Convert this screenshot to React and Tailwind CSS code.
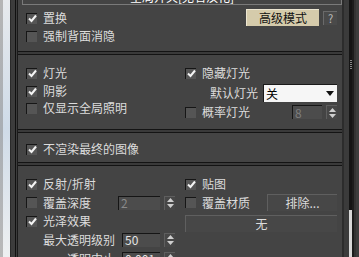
import React from "react";

const font = { fontFamily: '"Noto Sans CJK SC", "Noto Sans", sans-serif' };

function Check({ checked }) {
  return (
    <span className="w-[11px] h-[11px] shrink-0 bg-[#555] border-t border-l border-[#161616] border-b-[#4a4a4a] border-r-[#4a4a4a] flex items-center justify-center">
      {checked && (
        <svg width="9" height="9" viewBox="0 0 9 9">
          <path d="M1 4.5 L3.5 7 L8 1.5" stroke="#f4f4f4" strokeWidth="2" fill="none" />
        </svg>
      )}
    </span>
  );
}

function CB({ checked, label, className = "" }) {
  return (
    <div className={"flex items-center gap-[6px] " + className}>
      <Check checked={checked} />
      <span className="text-[12px] leading-[14px] text-[#dcdcdc] whitespace-nowrap">{label}</span>
    </div>
  );
}

function Arrows() {
  return (
    <div className="w-[11px] h-[14px] bg-[#474747] border-t border-l border-[#5e5e5e] border-b-[#222] border-r-[#222] flex flex-col items-center justify-center gap-[2px]">
      <svg width="7" height="4" viewBox="0 0 7 4"><path d="M3.5 0 L7 4 L0 4 Z" fill="#cfcfcf" /></svg>
      <svg width="7" height="4" viewBox="0 0 7 4"><path d="M0 0 L7 0 L3.5 4 Z" fill="#cfcfcf" /></svg>
    </div>
  );
}

function Spinner({ value, w, disabled }) {
  return (
    <div className="flex items-center gap-[4px]">
      <div
        className={
          "h-[14px] bg-[#4c4c4c] border-t border-l border-[#151515] border-b-[#5a5a5a] border-r-[#5a5a5a] flex items-center pl-[2px] text-[12px] leading-[12px] " +
          (disabled ? "text-[#8a8a8a]" : "text-[#e4e4e4]")
        }
        style={{ width: w }}
      >
        {value}
      </div>
      <Arrows />
    </div>
  );
}

function Sep() {
  return <div className="h-[4px] shrink-0 border-t border-b border-[#141414] bg-[#3a3a3a]" />;
}

function Btn({ children, className = "" }) {
  return (
    <div
      className={
        "h-[17px] bg-[#474747] border-t border-l border-[#5f5f5f] border-b-[#1c1c1c] border-r-[#1c1c1c] flex items-center justify-center text-[12px] leading-[12px] text-[#dcdcdc] " +
        className
      }
    >
      {children}
    </div>
  );
}

export default function App() {
  return (
    <div className="w-[359px] h-[257px] flex overflow-hidden bg-[#444]" style={font}>
      {/* left desktop strip */}
      <div className="w-[10px] h-full flex shrink-0">
        <div className="w-[3px] h-full bg-gradient-to-b from-[#b5b5b5] via-[#a9aeb4] to-[#b9b9b9]" />
        <div className="w-[7px] h-full bg-gradient-to-b from-[#e7eaed] via-[#cfdbe8] to-[#eef0f1]" />
      </div>
      <div className="w-[8px] h-full flex shrink-0">
        <div className="w-[1px] bg-[#2a2a2a]" />
        <div className="w-[4px] bg-[#3c3c3c]" />
        <div className="w-[1px] bg-[#111]" />
        <div className="w-[1px] bg-[#3c3c3c]" />
        <div className="w-[1px] bg-[#1a1a1a]" />
      </div>

      {/* panel */}
      <div className="w-[324px] h-full flex flex-col shrink-0">
        {/* title box */}
        <div className="ml-[4px] h-[5px] shrink-0 border-l border-r border-b border-[#7a7a7a] overflow-hidden flex justify-center">
          <div className="-mt-[10px] text-[12px] leading-[14px] text-white whitespace-nowrap">全局开关[无名汉化]</div>
        </div>

        {/* section 1 */}
        <div className="h-[46px] shrink-0 flex pt-[4px]">
          <div className="w-[228px] pl-[8px] flex flex-col">
            <CB checked label="置换" className="h-[18px]" />
            <CB label="强制背面消隐" className="h-[18px]" />
          </div>
          <div className="flex items-start gap-[4px]">
            <div className="w-[73px] h-[17px] bg-[#d5cbab] border-t border-l border-[#ece6d2] border-b-[#6c6655] border-r-[#6c6655] flex items-center justify-center text-[12px] leading-[12px] text-[#111]">
              高级模式
            </div>
            <div className="mt-[2px] w-[14px] h-[14px] bg-[#4a4a4a] border-t border-l border-[#6a6a6a] border-b-[#1e1e1e] border-r-[#1e1e1e] flex items-center justify-center text-[11px] leading-[11px] text-[#bdbdbd]">
              ?
            </div>
          </div>
        </div>
        <Sep />

        {/* section 2 */}
        <div className="h-[74px] shrink-0 flex pt-[9px]">
          <div className="w-[167px] pl-[8px] flex flex-col">
            <CB checked label="灯光" className="h-[18px]" />
            <CB checked label="阴影" className="h-[18px]" />
            <CB label="仅显示全局照明" className="h-[16px]" />
          </div>
          <div className="w-[152px] flex flex-col">
            <CB checked label="隐藏灯光" className="h-[18px]" />
            <div className="mt-[2px] h-[18px] flex items-center pl-[25px] gap-[5px]">
              <span className="text-[12px] leading-[14px] text-[#dcdcdc] whitespace-nowrap">默认灯光</span>
              <div className="w-[74px] h-[18px] bg-[#f6f6f6] border-t border-l border-[#1a1a1a] border-b-[#8a8a8a] border-r-[#8a8a8a] flex items-center justify-between pl-[2px] pr-[3px]">
                <span className="text-[12px] leading-[12px] text-black">关</span>
                <svg width="8" height="5" viewBox="0 0 8 5"><path d="M0 0 L8 0 L4 5 Z" fill="#111" /></svg>
              </div>
            </div>
            <div className="mt-[2px] h-[16px] flex items-center justify-between">
              <CB label="概率灯光" />
              <div className="flex items-center gap-[4px]">
                <div className="w-[30px] h-[14px] bg-[#4c4c4c] border-t border-l border-[#151515] border-b-[#5a5a5a] border-r-[#5a5a5a] flex items-center pl-[2px] text-[12px] leading-[12px] text-[#7e7e7e]">
                  8
                </div>
                <Arrows />
              </div>
            </div>
          </div>
        </div>
        <Sep />

        {/* section 3 */}
        <div className="h-[29px] shrink-0 pt-[7px] pl-[8px]">
          <CB checked label="不渲染最终的图像" className="h-[18px]" />
        </div>
        <Sep />

        {/* section 4 */}
        <div className="flex pt-[9px]">
          <div className="w-[167px] pl-[8px] flex flex-col">
            <CB checked label="反射/折射" className="h-[18px]" />
            <div className="h-[19px] flex items-center">
              <CB label="覆盖深度" className="w-[92px]" />
              <Spinner value="2" w={42} disabled />
            </div>
            <CB checked label="光泽效果" className="h-[18px]" />
            <div className="h-[19px] flex items-center">
              <span className="w-[96px] pl-[17px] text-[12px] leading-[14px] text-[#dcdcdc] whitespace-nowrap">最大透明级别</span>
              <Spinner value="50" w={38} />
            </div>
            <div className="h-[19px] flex items-center">
              <span className="w-[96px] pr-[7px] text-right text-[12px] leading-[14px] text-[#dcdcdc] whitespace-nowrap">透明中止</span>
              <Spinner value="0.001" w={38} />
            </div>
          </div>
          <div className="w-[152px] flex flex-col">
            <CB checked label="贴图" className="h-[18px]" />
            <div className="h-[19px] flex items-center justify-between">
              <CB label="覆盖材质" />
              <Btn className="w-[70px]">排除...</Btn>
            </div>
            <Btn className="mt-[3px] w-[152px]">无</Btn>
          </div>
        </div>
      </div>

      {/* right strip */}
      <div className="flex-1 h-full flex">
        <div className="w-[2px] bg-[#2c2c2c]" />
        <div className="w-[5px] bg-[#3b3b3b]" />
        <div className="w-[3px] bg-[#141414] flex flex-col">
          <div className="h-[60px]" />
          <div className="h-[12px] flex flex-col gap-[1px] items-center">
            <div className="w-[2px] h-[1px] bg-[#888]" />
            <div className="w-[2px] h-[1px] bg-[#888]" />
            <div className="w-[2px] h-[1px] bg-[#888]" />
            <div className="w-[2px] h-[1px] bg-[#888]" />
            <div className="w-[2px] h-[1px] bg-[#888]" />
          </div>
          <div className="flex-1" />
          <div className="h-[47px] bg-[#d8d8d8]" />
        </div>
        <div className="w-[2px] bg-[#1c1c1c]" />
        <div className="w-[2px] bg-[#333]" />
        <div className="flex-1 bg-[#3d3d3d]" />
      </div>
    </div>
  );
}
